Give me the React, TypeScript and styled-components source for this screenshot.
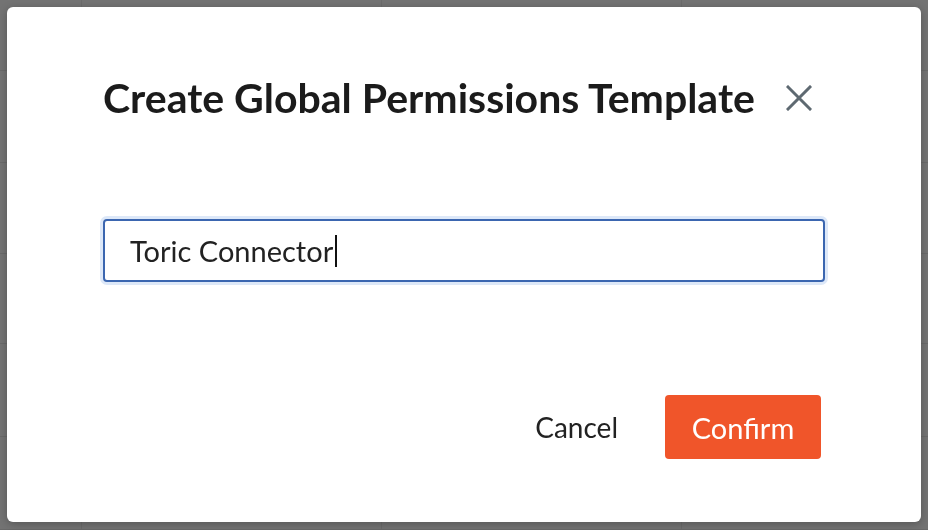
import styled, { createGlobalStyle } from "styled-components";

const GlobalStyle = createGlobalStyle`
  html, body {
    margin: 0;
    padding: 0;
    height: 100%;
  }
  body {
    font-family: Lato, "Noto Sans", sans-serif;
    background: #737373;
    overflow: hidden;
  }
  #root {
    height: 100%;
  }
`;

const rows = [76, 99, 98, 97, 100, 100];

const App: React.FC = () => {
  return (
    <>
      <GlobalStyle />
      <Backdrop>
        {rows.map((h, i) => (
          <BackRow key={i} style={{ height: h }}>
            <BackCell />
            <BackCell />
            <BackCell />
            <BackCell />
          </BackRow>
        ))}
      </Backdrop>
      <Overlay>
        <Modal role="dialog">
          <Header>
            <Title>Create Global Permissions Template</Title>
            <CloseButton aria-label="Close">
              <svg width="26" height="26" viewBox="0 0 26 26">
                <path
                  d="M2 2 L24 24 M24 2 L2 24"
                  stroke="#5e6971"
                  strokeWidth="3"
                  strokeLinecap="square"
                  fill="none"
                />
              </svg>
            </CloseButton>
          </Header>
          <Body>
            <Field role="textbox" tabIndex={0}>
              <FieldValue>Toric Connector</FieldValue>
              <Caret />
            </Field>
          </Body>
          <Footer>
            <TextButton>Cancel</TextButton>
            <PrimaryButton>Confirm</PrimaryButton>
          </Footer>
        </Modal>
      </Overlay>
    </>
  );
};

export default App;

const Backdrop = styled.div`
  display: flex;
  flex-direction: column;
  height: 100%;
`;

const BackRow = styled.div`
  display: grid;
  grid-template-columns: 82px 300px 300px 1fr;
  border-bottom: 1px solid #696969;
  box-sizing: border-box;
`;

const BackCell = styled.div`
  border-right: 1px solid #6b6b6b;

  &:last-child {
    border-right: none;
  }
`;

const Overlay = styled.div`
  position: fixed;
  inset: 0;
  display: flex;
  align-items: flex-start;
  justify-content: center;
  padding-top: 7px;
`;

const Modal = styled.div`
  width: 914px;
  height: 515px;
  box-sizing: border-box;
  background: #ffffff;
  border-radius: 6px;
  box-shadow: 0 2px 8px rgba(0, 0, 0, 0.25);
  padding: 67px 96px 63px;
  display: flex;
  flex-direction: column;
`;

const Header = styled.div`
  display: flex;
  align-items: center;
  justify-content: space-between;
  height: 48px;
`;

const Title = styled.h2`
  margin: 0;
  font-family: Lato, sans-serif;
  font-weight: 700;
  font-size: 41px;
  line-height: 48px;
  color: #1b1b1b;
  white-space: nowrap;
`;

const CloseButton = styled.button`
  display: flex;
  align-items: center;
  justify-content: center;
  background: none;
  border: none;
  padding: 0;
  margin-right: 13px;
  cursor: pointer;
`;

const Body = styled.div`
  padding-top: 97px;
  flex: 1;
`;

const Field = styled.div`
  display: flex;
  align-items: center;
  width: 100%;
  box-sizing: border-box;
  height: 63px;
  padding: 0 25px;
  font-family: Lato, sans-serif;
  font-size: 29px;
  color: #222222;
  border: 2px solid #3b66b0;
  border-radius: 4px;
  outline: none;
  box-shadow: 0 0 0 3px #dde8f8;
  background: #ffffff;
`;

const FieldValue = styled.span`
  white-space: pre;
`;

const Caret = styled.span`
  display: inline-block;
  width: 2px;
  height: 32px;
  margin-left: 2px;
  background: #111111;
`;

const Footer = styled.div`
  display: flex;
  justify-content: flex-end;
  align-items: center;
  gap: 47px;
  padding-right: 4px;
`;

const TextButton = styled.button`
  background: none;
  border: none;
  padding: 0;
  font-family: Lato, sans-serif;
  font-size: 28px;
  color: #222222;
  cursor: pointer;
`;

const PrimaryButton = styled.button`
  width: 156px;
  height: 64px;
  background: #f0552a;
  color: #ffffff;
  border: none;
  border-radius: 4px;
  font-family: Lato, sans-serif;
  font-size: 29px;
  cursor: pointer;
`;
